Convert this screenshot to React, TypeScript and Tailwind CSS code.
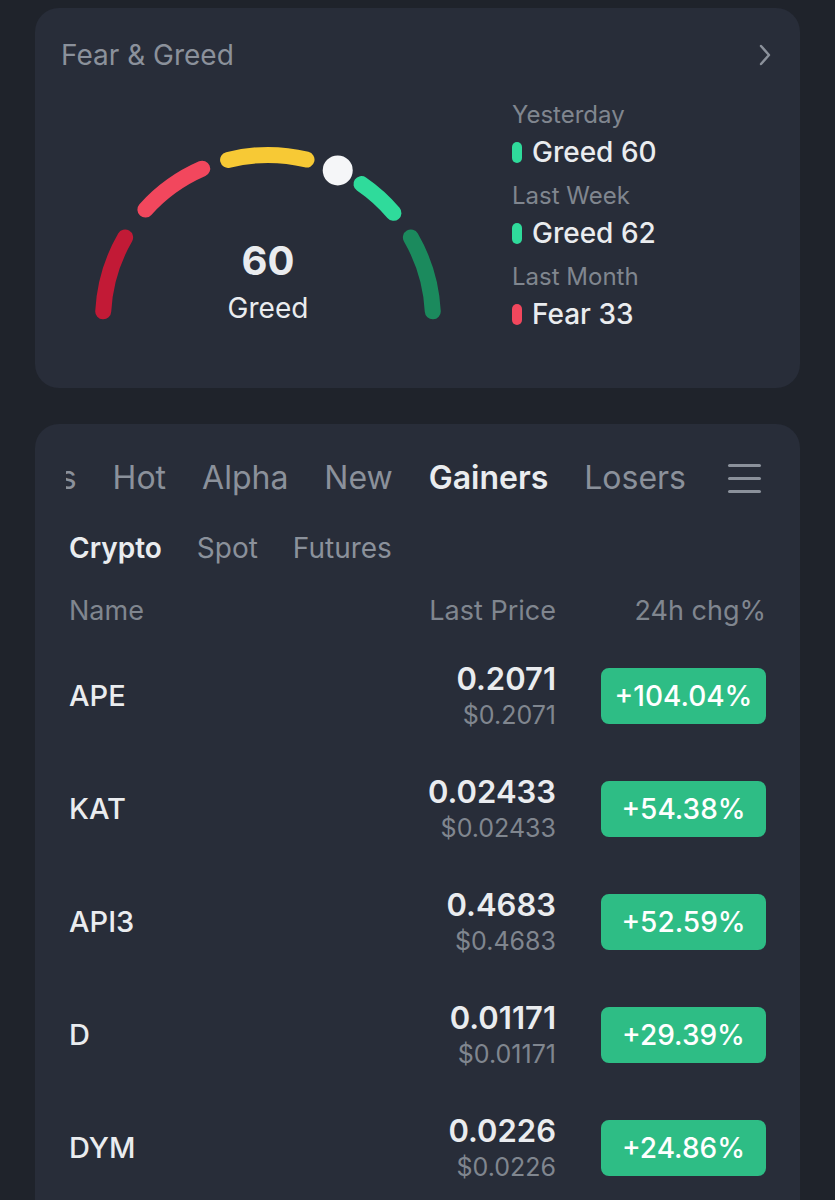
import React from 'react';

const CX = 180;
const CY = 180;
const R = 165;

const pt = (deg: number) => {
  const a = (deg * Math.PI) / 180;
  return [CX + R * Math.cos(a), CY - R * Math.sin(a)];
};

const arc = (from: number, to: number) => {
  const [x1, y1] = pt(from);
  const [x2, y2] = pt(to);
  return `M ${x1} ${y1} A ${R} ${R} 0 0 1 ${x2} ${y2}`;
};

const segments = [
  { from: 177, to: 150, color: '#c21a36' },
  { from: 138, to: 113.5, color: '#f2475d' },
  { from: 104, to: 76.5, color: '#f7c935' },
  { from: 55.5, to: 40.5, color: '#2fdb9b' },
  { from: 30, to: 3, color: '#1b8a5d' },
];

const Gauge = () => {
  const [kx, ky] = pt(65);
  return (
    <div className="relative w-[360px] h-[190px]">
      <svg width="360" height="190" viewBox="0 0 360 190">
        {segments.map((s, i) => (
          <path key={i} d={arc(s.from, s.to)} stroke={s.color} strokeWidth="16" strokeLinecap="round" fill="none" />
        ))}
        <circle cx={kx} cy={ky} r="15" fill="#f5f6f8" />
      </svg>
      {/* value in the middle of the dial */}
      <div className="absolute left-0 right-0 top-[97px] text-center text-[40px] leading-[48px] font-bold text-[#eaecef]">60</div>
      <div className="absolute left-0 right-0 top-[151px] text-center text-[28px] leading-[34px] text-[#eaecef]">Greed</div>
    </div>
  );
};

const history = [
  { label: 'Yesterday', value: 'Greed 60', color: 'bg-[#2fdb9b]' },
  { label: 'Last Week', value: 'Greed 62', color: 'bg-[#2fdb9b]' },
  { label: 'Last Month', value: 'Fear 33', color: 'bg-[#f2475d]' },
];

const rows = [
  { sym: 'APE', price: '0.2071', usd: '$0.2071', chg: '+104.04%' },
  { sym: 'KAT', price: '0.02433', usd: '$0.02433', chg: '+54.38%' },
  { sym: 'API3', price: '0.4683', usd: '$0.4683', chg: '+52.59%' },
  { sym: 'D', price: '0.01171', usd: '$0.01171', chg: '+29.39%' },
  { sym: 'DYM', price: '0.0226', usd: '$0.0226', chg: '+24.86%' },
];

const tabs = ['Favorites', 'Hot', 'Alpha', 'New', 'Gainers', 'Losers'];

const App: React.FC = () => {
  return (
    <div className="min-h-screen w-[835px] bg-[#1f232b] px-[35px] pt-[8px] pb-[40px] font-['Inter','Noto_Sans',sans-serif] overflow-hidden">
      {/* Fear & Greed card */}
      <section className="h-[380px] rounded-[24px] bg-[#282d39] pl-[26px] pr-[28px] pt-[30px]">
        <div className="flex items-center justify-between">
          <h2 className="text-[28px] leading-[34px] text-[#8b919b]">Fear &amp; Greed</h2>
          <svg width="14" height="22" viewBox="0 0 14 22">
            <path d="M3 2 L11 11 L3 20" stroke="#8b919b" strokeWidth="2.4" fill="none" strokeLinecap="round" strokeLinejoin="round" />
          </svg>
        </div>
        <div className="flex items-start mt-[28px]">
          <div className="ml-[27px] mt-[40px]">
            <Gauge />
          </div>
          <div className="ml-[64px] flex flex-col">
            {history.map((h, i) => (
              <div key={h.label} className={i > 0 ? 'mt-[12px]' : ''}>
                <div className="text-[24px] leading-[30px] text-[#80868f]">{h.label}</div>
                <div className="mt-[5px] flex items-center gap-[10px] text-[28px] leading-[34px] font-medium text-[#eaecef]">
                  <span className={`w-[10px] h-[21px] rounded-full ${h.color}`}></span>
                  {h.value}
                </div>
              </div>
            ))}
          </div>
        </div>
      </section>

      {/* Markets card */}
      <section className="mt-[36px] rounded-t-[24px] bg-[#282d39] pt-[34px] pb-[40px]">
        <div className="flex items-center pl-[31px] pr-[39px]">
          <div className="flex-1 overflow-hidden flex justify-end gap-[36px]">
            {tabs.map((t) => (
              <span
                key={t}
                className={`shrink-0 text-[32px] leading-[40px] ${t === 'Gainers' ? 'font-semibold text-[#eaecef]' : 'text-[#8b919b]'}`}
              >
                {t}
              </span>
            ))}
          </div>
          <div className="ml-[42px] w-[33px] flex flex-col gap-[10px]">
            <div className="h-[3px] rounded-full bg-[#8b919b]"></div>
            <div className="h-[3px] rounded-full bg-[#8b919b]"></div>
            <div className="h-[3px] rounded-full bg-[#8b919b]"></div>
          </div>
        </div>

        <div className="px-[34px]">
          <div className="mt-[33px] flex gap-[35px] text-[28px] leading-[34px]">
            <span className="font-semibold text-[#eaecef]">Crypto</span>
            <span className="text-[#8b919b]">Spot</span>
            <span className="text-[#8b919b]">Futures</span>
          </div>

          <div className="mt-[30px] grid grid-cols-[1fr_auto_165px] gap-x-[45px] text-[27px] leading-[32px] text-[#80868f]">
            <span>Name</span>
            <span className="text-right">Last Price</span>
            <span className="text-right">24h chg%</span>
          </div>

          <div className="mt-[12px]">
            {rows.map((r) => (
              <div key={r.sym} className="h-[113px] grid grid-cols-[1fr_auto_165px] gap-x-[45px] items-center">
                <span className="text-[29px] leading-[36px] font-medium text-[#eaecef]">{r.sym}</span>
                <div className="flex flex-col items-end">
                  <span className="text-[31px] leading-[36px] font-semibold text-[#eaecef]">{r.price}</span>
                  <span className="mt-[3px] text-[25px] leading-[30px] text-[#80868f]">{r.usd}</span>
                </div>
                <div className="h-[56px] rounded-[8px] bg-[#2ebd85] flex items-center justify-center text-[28px] font-medium text-white">
                  {r.chg}
                </div>
              </div>
            ))}
          </div>
        </div>
      </section>
    </div>
  );
};

export default App;
